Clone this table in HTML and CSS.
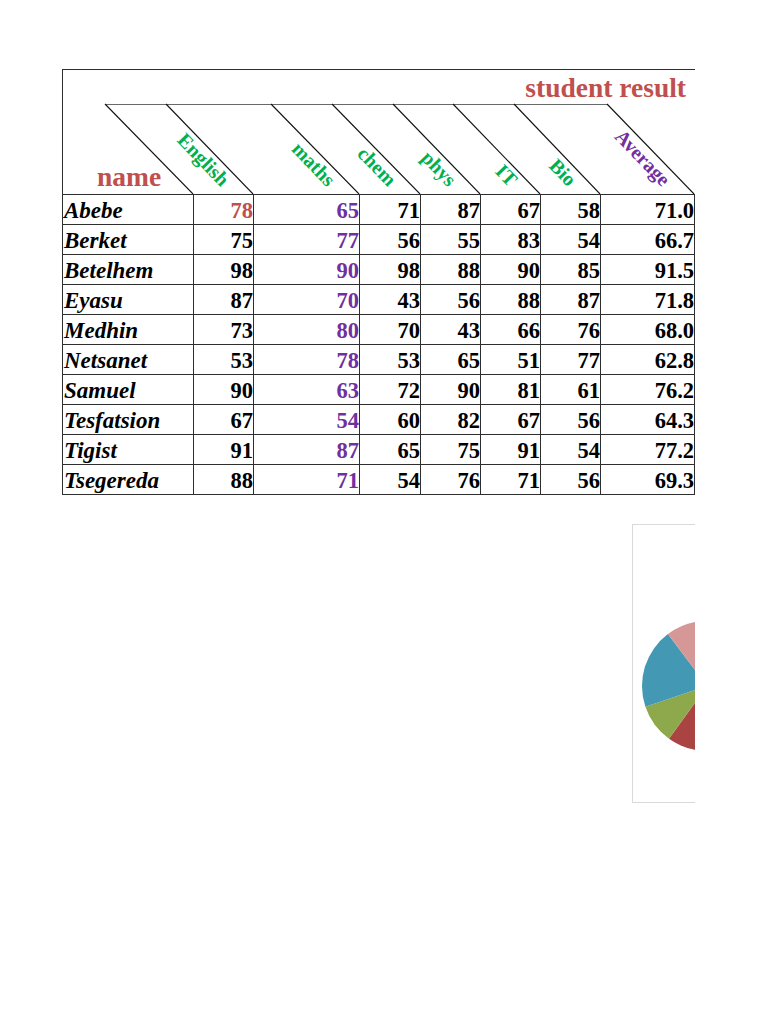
FILE: index.html
```html
<!DOCTYPE html>
<html lang="en">
<head>
<meta charset="utf-8">
<title>student result</title>
<link rel="stylesheet" href="styles.css">
</head>
<body>
<div class="page">
  <div class="sheet">
    <div class="head">
      <svg class="head-art" width="632" height="124" viewBox="0 0 632 124">
        <line class="topline" x1="42" y1="34.5" x2="544" y2="34.5"/>
        <line class="diag" x1="42" y1="34" x2="130" y2="124"/>
        <line class="diag" x1="103" y1="34" x2="190" y2="124"/>
        <line class="diag" x1="208" y1="34" x2="296" y2="124"/>
        <line class="diag" x1="269" y1="34" x2="357" y2="124"/>
        <line class="diag" x1="330" y1="34" x2="417" y2="124"/>
        <line class="diag" x1="390" y1="34" x2="477" y2="124"/>
        <line class="diag" x1="451" y1="34" x2="537" y2="124"/>
        <line class="diag" x1="544" y1="34" x2="631" y2="124"/>
        <text class="title" x="623" y="27">student result</text>
        <text class="namehead" x="34" y="116">name</text>
        <text class="subj" x="158" y="117.5" transform="rotate(46 158 117.5)">English</text>
        <text class="subj" x="264" y="117.5" transform="rotate(46 264 117.5)">maths</text>
        <text class="subj" x="325" y="117.5" transform="rotate(46 325 117.5)">chem</text>
        <text class="subj" x="385" y="117.5" transform="rotate(46 385 117.5)">phys</text>
        <text class="subj" x="446" y="117.5" transform="rotate(46 446 117.5)">IT</text>
        <text class="subj" x="505" y="117.5" transform="rotate(46 505 117.5)">Bio</text>
        <text class="subj avg" x="599" y="117.5" transform="rotate(46 599 117.5)">Average</text>
      </svg>
    </div>

    <div class="c nm">Abebe</div><div class="c n red">78</div><div class="c n purple">65</div><div class="c n">71</div><div class="c n">87</div><div class="c n">67</div><div class="c n">58</div><div class="c n">71.0</div>
    <div class="c nm">Berket</div><div class="c n">75</div><div class="c n purple">77</div><div class="c n">56</div><div class="c n">55</div><div class="c n">83</div><div class="c n">54</div><div class="c n">66.7</div>
    <div class="c nm">Betelhem</div><div class="c n">98</div><div class="c n purple">90</div><div class="c n">98</div><div class="c n">88</div><div class="c n">90</div><div class="c n">85</div><div class="c n">91.5</div>
    <div class="c nm">Eyasu</div><div class="c n">87</div><div class="c n purple">70</div><div class="c n">43</div><div class="c n">56</div><div class="c n">88</div><div class="c n">87</div><div class="c n">71.8</div>
    <div class="c nm">Medhin</div><div class="c n">73</div><div class="c n purple">80</div><div class="c n">70</div><div class="c n">43</div><div class="c n">66</div><div class="c n">76</div><div class="c n">68.0</div>
    <div class="c nm">Netsanet</div><div class="c n">53</div><div class="c n purple">78</div><div class="c n">53</div><div class="c n">65</div><div class="c n">51</div><div class="c n">77</div><div class="c n">62.8</div>
    <div class="c nm">Samuel</div><div class="c n">90</div><div class="c n purple">63</div><div class="c n">72</div><div class="c n">90</div><div class="c n">81</div><div class="c n">61</div><div class="c n">76.2</div>
    <div class="c nm">Tesfatsion</div><div class="c n">67</div><div class="c n purple">54</div><div class="c n">60</div><div class="c n">82</div><div class="c n">67</div><div class="c n">56</div><div class="c n">64.3</div>
    <div class="c nm">Tigist</div><div class="c n">91</div><div class="c n purple">87</div><div class="c n">65</div><div class="c n">75</div><div class="c n">91</div><div class="c n">54</div><div class="c n">77.2</div>
    <div class="c nm">Tsegereda</div><div class="c n">88</div><div class="c n purple">71</div><div class="c n">54</div><div class="c n">76</div><div class="c n">71</div><div class="c n">56</div><div class="c n">69.3</div>
  </div>

  <div class="chart">
    <svg class="pie" width="200" height="277" viewBox="0 0 200 277">
      <path class="s-blue2" d="M74 161 L74 96 A65 65 0 0 1 130.3 193.5 Z"/>
      <path class="s-red" d="M74 161 L130.3 193.5 A65 65 0 0 1 36 213.7 Z"/>
      <path class="s-green" d="M74 161 L36 213.7 A65 65 0 0 1 12.4 181.8 Z"/>
      <path class="s-teal" d="M74 161 L12.4 181.8 A65 65 0 0 1 34.9 109.1 Z"/>
      <path class="s-pink" d="M74 161 L34.9 109.1 A65 65 0 0 1 74 96 Z"/>
    </svg>
  </div>
</div>
</body>
</html>
```

FILE: styles.css
```css
html, body {
  margin: 0;
  padding: 0;
  background: #ffffff;
}

body {
  font-family: "Liberation Serif", "Times New Roman", serif;
  color: #000000;
}

.page {
  margin: 69px 0 0 62px;
  width: 633px;
  overflow: hidden;
}

.sheet {
  display: grid;
  grid-template-columns: 131px 60px 106px 61px 60px 60px 60px 94px;
  width: 633px;
  box-sizing: border-box;
  border-left: 1px solid #2e2e2e;
  border-top: 1px solid #2e2e2e;
}

.head {
  grid-column: 1 / -1;
  height: 125px;
  box-sizing: border-box;
  border-bottom: 1px solid #2e2e2e;
}

.head-art {
  display: block;
}

.topline {
  stroke: #6a6a6a;
  stroke-width: 1;
}

.diag {
  stroke: #111111;
  stroke-width: 1.1;
}

.title {
  font-family: "Liberation Serif", "Times New Roman", serif;
  font-weight: bold;
  font-size: 27.5px;
  fill: #c0504d;
  text-anchor: end;
}

.namehead {
  font-family: "Liberation Serif", "Times New Roman", serif;
  font-weight: bold;
  font-size: 27.5px;
  fill: #c0504d;
}

.subj {
  font-family: "Liberation Serif", "Times New Roman", serif;
  font-weight: bold;
  font-size: 20px;
  fill: #00b050;
  text-anchor: end;
}

.subj.avg {
  fill: #7030a0;
}

.c {
  height: 30px;
  box-sizing: border-box;
  border-right: 1px solid #2e2e2e;
  border-bottom: 1px solid #2e2e2e;
  font-size: 22.5px;
  font-weight: bold;
  line-height: 31px;
  white-space: nowrap;
  overflow: hidden;
}

.nm {
  font-style: italic;
  font-size: 23px;
  padding-left: 1px;
  text-align: left;
}

.n {
  text-align: right;
  padding-right: 0;
}

.red {
  color: #c0504d;
}

.purple {
  color: #7030a0;
}

.chart {
  margin: 29px 0 0 570px;
  width: 300px;
  height: 279px;
  box-sizing: border-box;
  border: 1px solid #d9d9d9;
  background: #ffffff;
}

.pie {
  display: block;
}

.s-pink { fill: #d69896; }
.s-teal { fill: #4398b4; }
.s-green { fill: #8ea84c; }
.s-red { fill: #a94442; }
.s-blue2 { fill: #7f9fc9; }
```
